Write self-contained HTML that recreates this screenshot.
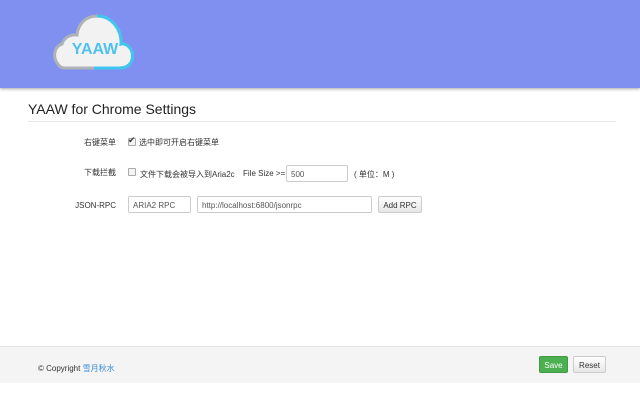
<!DOCTYPE html>
<html><head><meta charset="utf-8"><style>
body{margin:0;width:640px;height:400px;background:#fff;font-family:"Liberation Sans","Noto Sans CJK SC",sans-serif;position:relative;overflow:hidden;color:#333}
.hdr{position:absolute;left:0;top:0;width:640px;height:88px;background:#7f90f0;box-shadow:0 1px 3px rgba(0,0,0,.35)}
.title{position:absolute;left:28px;top:101px;font-size:14px;color:#222}
.hr{position:absolute;left:28px;top:121px;width:588px;height:1px;background:#e8e8e8}
.lab{position:absolute;font-size:8px;color:#333;text-align:right;width:60px;left:56px}
.t{position:absolute;font-size:8px;color:#333}
.cb{position:absolute;width:6px;height:6px;border:1px solid #aaa;border-radius:1px;background:#f4f4f4}
.in{position:absolute;height:17px;border:1px solid #ccc;border-radius:2px;box-sizing:border-box;font-size:8px;color:#555;padding:4px 0 0 4px;background:#fff}
.btn{position:absolute;box-sizing:border-box;border:1px solid #ccc;border-radius:2px;background:linear-gradient(#fff,#e6e6e6);font-size:8px;text-align:center}
.ftr{position:absolute;left:0;top:346px;width:640px;height:36px;background:#f4f4f4;border-top:1px solid #e4e4e4}
</style></head><body>
<div class="hdr">
<svg width="90" height="64" style="position:absolute;left:50px;top:8px" viewBox="0 0 90 64">
<path d="M14 60 H70 C80 60 84 52 82 44 C80 38 75 35 71 36 C72 22 62 8 47 8 C36 8 28 16 27 27 C20 26 14 30 12 36 C5 38 3 47 6 53 C8 57 11 60 14 60Z" fill="#f2f2f2" stroke="#aeb3b8" stroke-width="3"/>
<path d="M44 60 H70 C80 60 84 52 82 44 C80 38 75 35 71 36 C72 22 62 8 47 8" fill="none" stroke="#3fc6f0" stroke-width="3"/>
<text x="45" y="46" text-anchor="middle" font-family="Liberation Sans" font-weight="bold" font-size="16" fill="#4fc2ee">YAAW</text>
</svg>
</div>
<div class="title">YAAW for Chrome Settings</div>
<div class="hr"></div>
<div class="lab" style="top:137px">右键菜单</div>
<div class="cb" style="left:128px;top:138px"></div><div class="t" style="left:128px;top:135px;font-size:9px">✔</div>
<div class="t" style="left:139px;top:137px">选中即可开启右键菜单</div>
<div class="lab" style="top:167px">下载拦截</div>
<div class="cb" style="left:128px;top:168px"></div>
<div class="t" style="left:140px;top:169px">文件下载会被导入到Aria2c</div>
<div class="t" style="left:243px;top:169px">File Size &gt;=</div>
<div class="in" style="left:286px;top:165px;width:62px">500</div>
<div class="t" style="left:354px;top:169px">( 单位：M )</div>
<div class="lab" style="top:201px">JSON-RPC</div>
<div class="in" style="left:128px;top:196px;width:63px">ARIA2 RPC</div>
<div class="in" style="left:197px;top:196px;width:175px">http://localhost:6800/jsonrpc</div>
<div class="btn" style="left:378px;top:196px;width:44px;height:17px;padding-top:4px">Add RPC</div>
<div class="ftr">
<div class="t" style="left:38px;top:16px">© Copyright <span style="color:#3a8fd8">雪月秋水</span></div>
<div class="btn" style="left:539px;top:9px;width:29px;height:17px;padding-top:4px;background:#4caf50;border-color:#3f9a43;color:#fff">Save</div>
<div class="btn" style="left:573px;top:9px;width:33px;height:17px;padding-top:4px">Reset</div>
</div>
</body></html>
